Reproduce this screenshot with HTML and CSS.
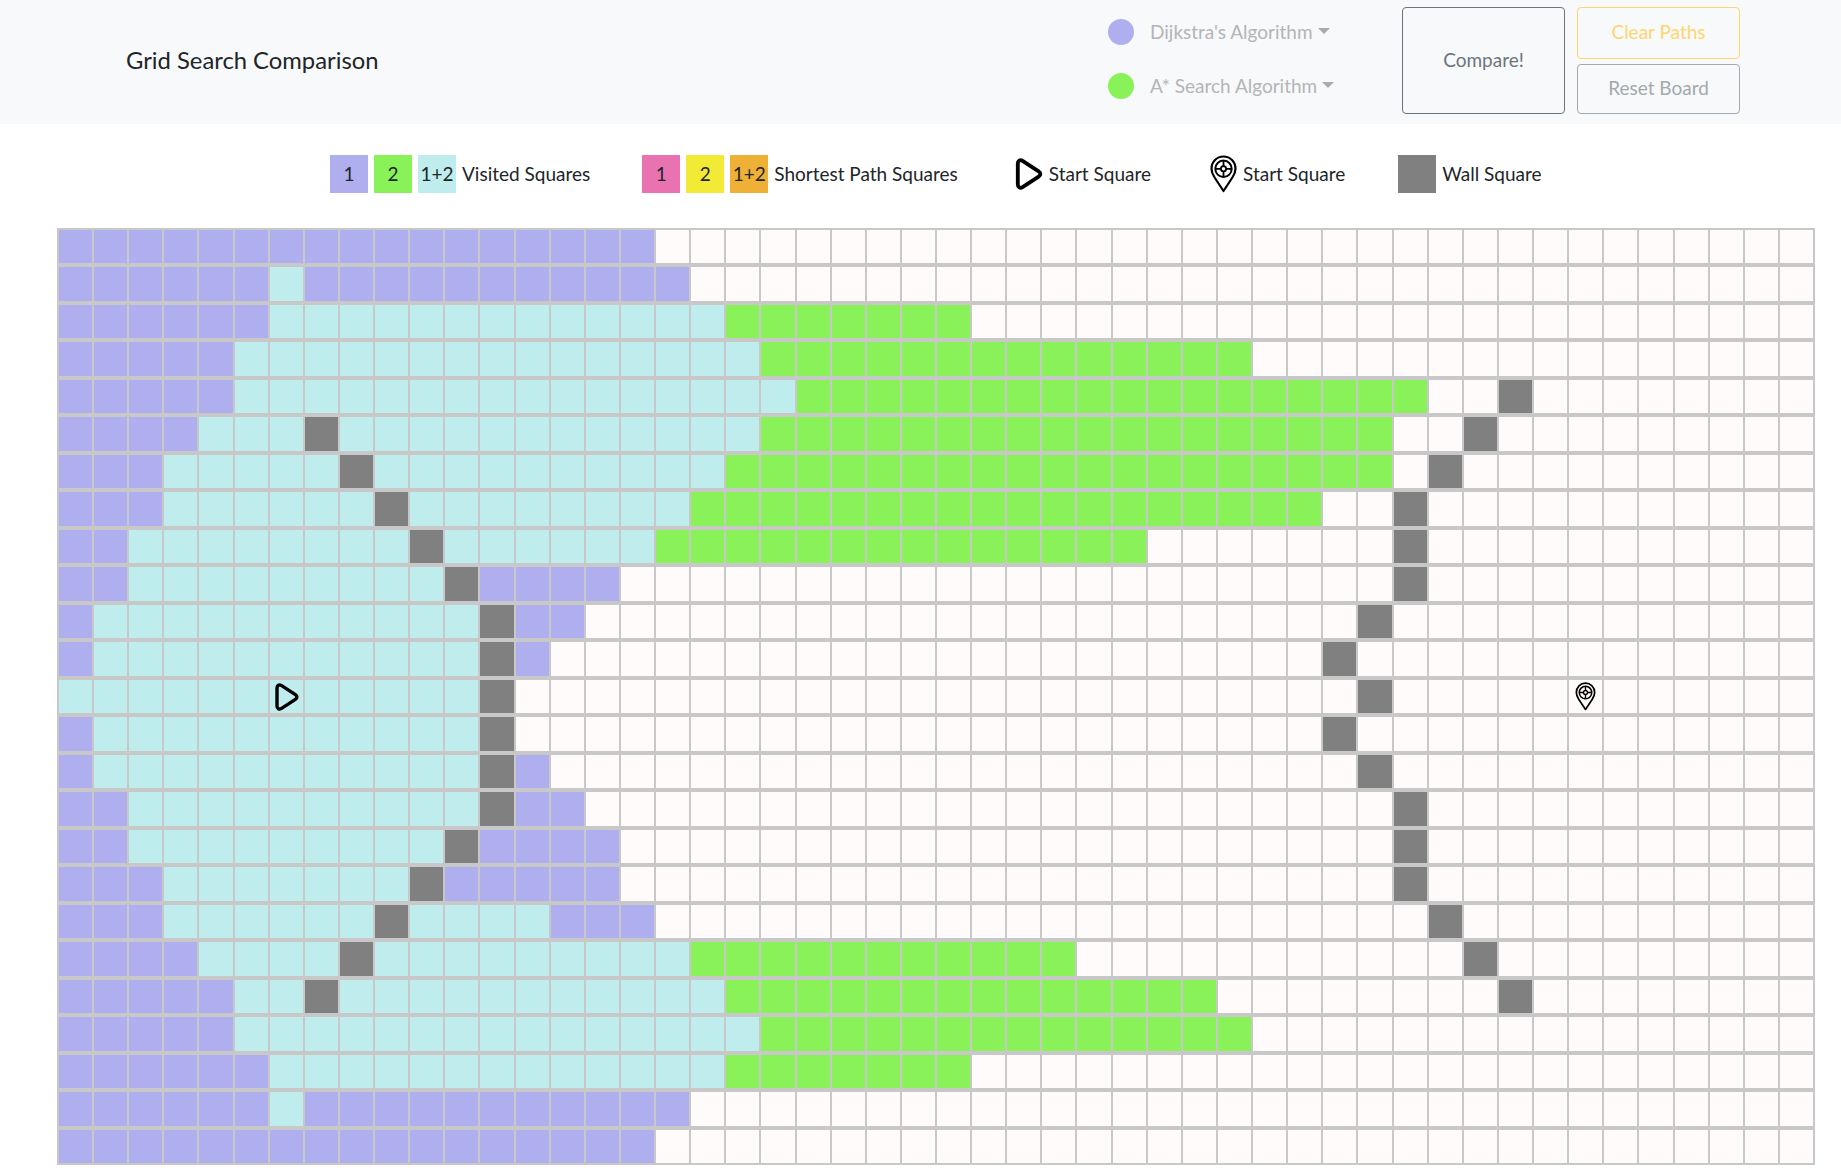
FILE: index.html
```html
<!DOCTYPE html>
<html lang="en">
<head>
    <meta charset="UTF-8">
    <meta name="viewport" content="width=device-width, initial-scale=1.0">
    <title>Grid Search Comparison</title>
    <link rel="stylesheet" href="styles.css">
</head>
<body>
    <svg class="icon-defs" aria-hidden="true">
        <symbol id="icon-start" viewBox="0 0 26 30">
            <path d="M4 6 C4 3.4 6.2 2.2 8.2 3.4 L22.4 12.6 C24.4 13.9 24.4 16.1 22.4 17.4 L8.2 26.6 C6.2 27.8 4 26.6 4 24 Z" fill="none" stroke="#000" stroke-width="3.4" stroke-linejoin="round"/>
        </symbol>
        <symbol id="icon-target" viewBox="0 0 27 38">
            <path d="M13.5 36 L4.6 22.5 C2.8 19.8 1.5 17.3 1.5 13.8 C1.5 6.8 6.8 1.5 13.5 1.5 C20.2 1.5 25.5 6.8 25.5 13.8 C25.5 17.3 24.2 19.8 22.4 22.5 Z" fill="none" stroke="#000" stroke-width="2.2" stroke-linejoin="round"/>
            <circle cx="13.5" cy="13.8" r="8.2" fill="none" stroke="#000" stroke-width="2"/>
            <circle cx="13.5" cy="13.8" r="2.6" fill="none" stroke="#000" stroke-width="1.8"/>
            <path d="M13.5 5.6 V11.2 M13.5 16.4 V22 M5.3 13.8 H10.9 M16.1 13.8 H21.7" stroke="#000" stroke-width="1.8"/>
        </symbol>
    </svg>

    <nav class="navbar">
        <div class="brand">Grid Search Comparison</div>
        <div class="algorithms">
            <div class="algorithm">
                <span class="dot dot-one"></span>
                <span class="dropdown">Dijkstra's Algorithm</span>
            </div>
            <div class="algorithm">
                <span class="dot dot-two"></span>
                <span class="dropdown">A* Search Algorithm</span>
            </div>
        </div>
        <button class="btn btn-compare">Compare!</button>
        <div class="side-buttons">
            <button class="btn btn-clear">Clear Paths</button>
            <button class="btn btn-reset">Reset Board</button>
        </div>
    </nav>

    <div class="legend">
        <div class="legend-item item-visited">
            <span class="swatch visited-one">1</span>
            <span class="swatch visited-two">2</span>
            <span class="swatch visited-both">1+2</span>
            <span class="legend-label">Visited Squares</span>
        </div>
        <div class="legend-item item-path">
            <span class="swatch path-one">1</span>
            <span class="swatch path-two">2</span>
            <span class="swatch path-both">1+2</span>
            <span class="legend-label">Shortest Path Squares</span>
        </div>
        <div class="legend-item item-start">
            <svg class="legend-start"><use href="#icon-start"/></svg>
            <span class="legend-label">Start Square</span>
        </div>
        <div class="legend-item item-target">
            <svg class="legend-target"><use href="#icon-target"/></svg>
            <span class="legend-label">Start Square</span>
        </div>
        <div class="legend-item item-wall">
            <span class="swatch wall-swatch"></span>
            <span class="legend-label">Wall Square</span>
        </div>
    </div>

    <div class="board" id="board"></div>

    <script src="script.js"></script>
</body>
</html>
```

FILE: styles.css
```css
* {
    margin: 0;
    padding: 0;
    box-sizing: border-box;
}

body {
    font-family: 'Lato', 'Noto Sans', sans-serif;
    font-size: 19px;
    color: #212529;
    background-color: #fff;
}

.icon-defs {
    display: none;
}

.navbar {
    display: flex;
    align-items: center;
    height: 124px;
    padding-left: 126px;
    padding-bottom: 4px;
    background-color: #f8f9fa;
}

.brand {
    font-size: 23.8px;
    width: 982px;
}

.algorithms {
    display: flex;
    flex-direction: column;
    gap: 28px;
    width: 294px;
    margin-bottom: 3px;
}

.algorithm {
    display: flex;
    align-items: center;
    color: #b3b5b7;
}

.dot {
    width: 26px;
    height: 26px;
    border-radius: 50%;
    margin-right: 16px;
}

.dot-one {
    background-color: #afaeee;
}

.dot-two {
    background-color: #8af259;
}

.dropdown::after {
    content: "";
    display: inline-block;
    margin-left: 5px;
    vertical-align: 5px;
    border-top: 6px solid #a8aaac;
    border-left: 6px solid transparent;
    border-right: 6px solid transparent;
}

.btn {
    font-family: inherit;
    font-size: 19px;
    width: 163px;
    padding-bottom: 2px;
    background-color: transparent;
    border: 1px solid;
    border-radius: 4px;
}

.btn-compare {
    height: 107px;
    color: #6c757d;
    border-color: #6c757d;
    margin-right: 12px;
}

.side-buttons {
    display: flex;
    flex-direction: column;
    gap: 5px;
}

.btn-clear {
    height: 52px;
    color: #fdd670;
    border-color: #fdd670;
}

.btn-reset {
    height: 50px;
    color: #a3a9ae;
    border-color: #a3a9ae;
}

.legend {
    display: flex;
    align-items: center;
    height: 38px;
    margin-top: 31px;
    padding-left: 330px;
}

.legend-item {
    display: flex;
    align-items: center;
    white-space: nowrap;
}

.legend-label {
    padding-bottom: 2px;
}

.item-path {
    margin-left: 52px;
}

.item-start {
    margin-left: 55px;
}

.item-target {
    margin-left: 59px;
}

.item-wall {
    margin-left: 53px;
}

.swatch {
    display: flex;
    align-items: center;
    justify-content: center;
    width: 38px;
    height: 38px;
    margin-right: 6px;
    padding-bottom: 2px;
}

.visited-one {
    background-color: #afaeee;
}

.visited-two {
    background-color: #8af259;
}

.visited-both {
    background-color: #bfecec;
}

.path-one {
    background-color: #e973b0;
}

.path-two {
    background-color: #f2ea35;
}

.path-both {
    background-color: #efb036;
}

.wall-swatch {
    background-color: #808080;
}

.legend-start {
    width: 30px;
    height: 34px;
    margin-right: 6px;
}

.legend-target {
    width: 27px;
    height: 38px;
    margin-right: 6px;
}

.board {
    display: grid;
    grid-template-columns: repeat(50, 1fr);
    grid-template-rows: repeat(25, 1fr);
    column-gap: 2px;
    row-gap: 4px;
    width: 1758px;
    height: 937px;
    margin: 35px 0 0 57px;
    padding: 2px;
    background-color: #c8c8c8;
}

.cell {
    display: flex;
    align-items: center;
    justify-content: center;
    background-color: #fffbfa;
}

.cell svg {
    flex-shrink: 0;
}

.cell-p {
    background-color: #afaeee;
}

.cell-c {
    background-color: #bfecec;
}

.cell-g {
    background-color: #8af259;
}

.cell-w {
    background-color: #808080;
}

.board-start {
    width: 26px;
    height: 30px;
    margin-top: 1px;
}

.board-target {
    width: 21px;
    height: 29px;
}
```

FILE: script.js
```js
// p = visited by 1, c = visited by both, g = visited by 2, w = wall, e = empty
// the rest of a row stays empty
const rows = [
    'p17',
    'p6 c1 p11',
    'p6 c13 g7',
    'p5 c15 g14',
    'p5 c16 g18 e2 w1',
    'p4 c3 w1 c12 g18 e2 w1',
    'p3 c5 w1 c10 g19 e1 w1',
    'p3 c6 w1 c8 g18 e2 w1',
    'p2 c8 w1 c6 g14 e7 w1',
    'p2 c9 w1 p4 e22 w1',
    'p1 c11 w1 p2 e22 w1',
    'p1 c11 w1 p1 e22 w1',
    'c12 w1 e24 w1',
    'p1 c11 w1 e23 w1',
    'p1 c11 w1 p1 e23 w1',
    'p2 c10 w1 p2 e23 w1',
    'p2 c9 w1 p4 e22 w1',
    'p3 c7 w1 p5 e22 w1',
    'p3 c6 w1 c4 p3 e22 w1',
    'p4 c4 w1 c9 g11 e11 w1',
    'p5 c2 w1 c11 g14 e8 w1',
    'p5 c15 g14',
    'p6 c13 g7',
    'p6 c1 p11',
    'p17'
];

const board = document.getElementById('board');

rows.forEach(function(row, r) {
    const types = [];
    row.split(' ').forEach(function(run) {
        for (let i = 0; i < parseInt(run.slice(1)); i++) {
            types.push(run[0]);
        }
    });

    for (let c = 0; c < 50; c++) {
        const cell = document.createElement('div');
        cell.className = 'cell cell-' + (types[c] || 'e');
        if (r === 12 && c === 6) {
            cell.innerHTML = '<svg class="board-start"><use href="#icon-start"/></svg>';
        }
        if (r === 12 && c === 43) {
            cell.innerHTML = '<svg class="board-target"><use href="#icon-target"/></svg>';
        }
        board.appendChild(cell);
    }
});
```
